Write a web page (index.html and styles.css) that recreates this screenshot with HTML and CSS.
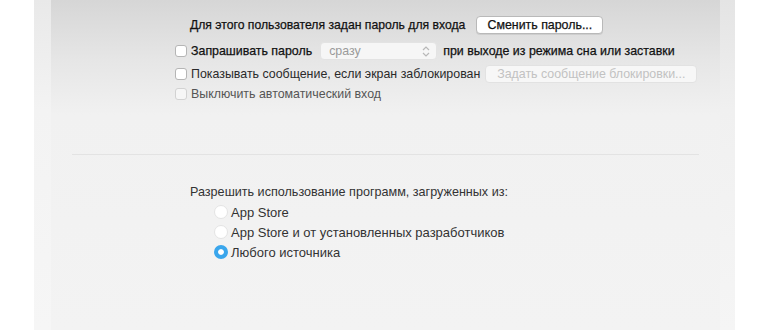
FILE: index.html
```html
<!DOCTYPE html>
<html lang="ru">
<head>
<meta charset="utf-8">
<link rel="stylesheet" href="styles.css">
</head>
<body>
<div class="window">
  <div class="edge-left"></div>
  <div class="panel">
    <section class="login">
      <div class="row row-title">
        <span class="label strong title">Для этого пользователя задан пароль для входа</span>
        <button class="btn">Сменить пароль...</button>
      </div>
      <div class="row row-ask">
        <span class="check"></span>
        <span class="label strong">Запрашивать пароль</span>
        <span class="popup">
          <span class="popup-text">сразу</span>
          <svg class="stepper" width="8" height="11" viewBox="0 0 8 11"><path d="M1 4 L4 1 L7 4 M1 7 L4 10 L7 7" fill="none" stroke="#b8b8b8" stroke-width="1.2"/></svg>
        </span>
        <span class="label strong">при выходе из режима сна или заставки</span>
      </div>
      <div class="row row-msg">
        <span class="check"></span>
        <span class="label">Показывать сообщение, если экран заблокирован</span>
        <button class="btn btn-disabled">Задать сообщение блокировки...</button>
      </div>
      <div class="row row-auto">
        <span class="check check-faint"></span>
        <span class="label muted">Выключить автоматический вход</span>
      </div>
    </section>
    <hr class="sep">
    <section class="apps">
      <div class="apps-title">Разрешить использование программ, загруженных из:</div>
      <div class="radio-list">
        <div class="radio-row"><span class="radio"></span><span class="radio-label">App Store</span></div>
        <div class="radio-row"><span class="radio"></span><span class="radio-label">App Store и от установленных разработчиков</span></div>
        <div class="radio-row"><span class="radio radio-on"></span><span class="radio-label">Любого источника</span></div>
      </div>
    </section>
  </div>
  <div class="edge-right"></div>
</div>
</body>
</html>
```
FILE: styles.css
```css
html, body {
  margin: 0;
  padding: 0;
  background: #ffffff;
}
body {
  font-family: "Liberation Sans", Arial, sans-serif;
  font-size: 12.4px;
  color: #222;
}
.window {
  display: flex;
  margin-left: 34px;
  width: 701px;
  height: 330px;
}
.edge-left {
  width: 17px;
  background: linear-gradient(#e9e9e9 0px, #f3f3f3 110px, #f6f6f6 330px);
}
.edge-right {
  width: 15px;
  background: linear-gradient(#e4e4e4 0px, #f0f0f0 110px, #f5f5f5 330px);
}
.panel {
  flex: 1;
  background: linear-gradient(#d6d6d6 0px, #e6e6e6 60px, #f1f1f1 115px, #f3f3f3 330px);
  display: flex;
  flex-direction: column;
}
.login {
  padding-top: 16px;
  padding-left: 124px;
}
.row {
  display: flex;
  align-items: center;
  white-space: nowrap;
}
.row-title {
  height: 18px;
  padding-left: 15px;
}
.title {
  font-size: 12.2px;
}
.row-ask {
  height: 18px;
  margin-top: 8px;
}
.row-msg {
  height: 18px;
  margin-top: 5px;
}
.row-auto {
  height: 16px;
  margin-top: 3px;
}
.label {
  color: #2a2a2a;
}
.strong {
  color: #111;
  -webkit-text-stroke: 0.25px #111;
}
.muted {
  color: #555;
}
.check {
  width: 12px;
  height: 12px;
  box-sizing: border-box;
  border: 1px solid #b5b5b5;
  border-radius: 3px;
  background: #fff;
  margin-right: 4px;
}
.check-faint {
  border-color: #d2d2d2;
  background: #f6f6f6;
}
.btn {
  font: inherit;
  color: #111;
  -webkit-text-stroke: 0.25px #111;
  height: 18px;
  padding: 0 10px;
  margin-left: 11px;
  border: 1px solid #b9b9b9;
  border-radius: 4px;
  background: #fff;
  box-shadow: 0 1px 0 rgba(0,0,0,0.08);
  line-height: 16px;
}
.row-title .btn {
  width: 127px;
}
.btn-disabled {
  color: #c2c2c2;
  -webkit-text-stroke: 0;
  border-color: #e2e2e2;
  background: #f7f7f7;
  box-shadow: none;
  margin-left: 5px;
  width: 212px;
}
.popup {
  display: flex;
  align-items: center;
  justify-content: space-between;
  width: 117px;
  height: 18px;
  box-sizing: border-box;
  margin: 0 6px 0 8px;
  padding: 0 6px 0 8px;
  border: 1px solid #e3e3e3;
  border-radius: 4px;
  background: #f6f6f6;
}
.popup-text {
  color: #9a9a9a;
}
.sep {
  margin: 52px 21px 0 21px;
  border: 0;
  height: 1px;
  background: #e3e3e3;
}
.apps {
  padding-top: 28px;
  padding-left: 139px;
  color: #333;
  font-size: 12.6px;
}
.apps-title {
  height: 18px;
  line-height: 18px;
}
.radio-list {
  padding-top: 1px;
}
.radio-row {
  display: flex;
  align-items: center;
  height: 20px;
  padding-left: 24px;
  font-size: 13px;
}
.radio {
  width: 14px;
  height: 14px;
  box-sizing: border-box;
  border-radius: 50%;
  background: #fff;
  border: 1px solid #e4e4e4;
  margin-right: 3px;
}
.radio-on {
  background: #3aa6ec;
  border: 4px solid #3aa6ec;
  box-shadow: inset 0 0 0 3px #fff;
}
.radio-label {
  color: #333;
}
```
